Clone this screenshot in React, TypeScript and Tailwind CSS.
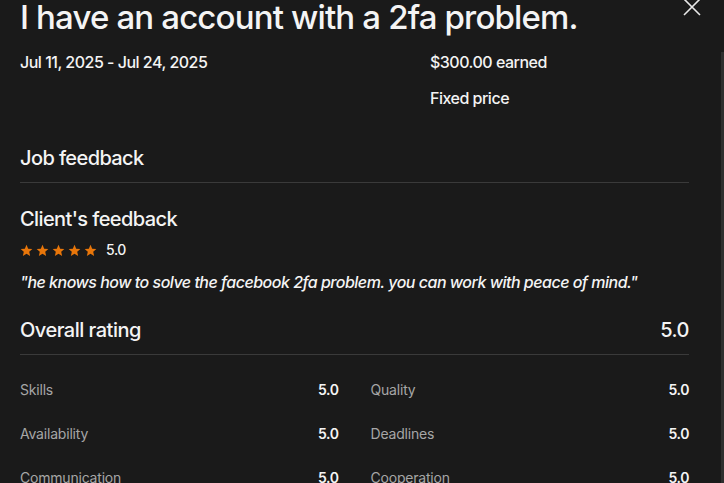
import React from "react";

const Star = () => (
  <svg width="13" height="13" viewBox="0 0 24 24" fill="#e8760a">
    <path d="M12 1.5l3.1 7.1 7.7.7-5.8 5.1 1.7 7.6L12 18l-6.7 4 1.7-7.6L1.2 9.3l7.7-.7z" />
  </svg>
);

const rows: [string, string, string, string][] = [
  ["Skills", "5.0", "Quality", "5.0"],
  ["Availability", "5.0", "Deadlines", "5.0"],
  ["Communication", "5.0", "Cooperation", "5.0"],
];

export default function App() {
  return (
    <div
      className="relative flex h-[483px] w-[724px] overflow-hidden bg-[#1a1a1a] text-[#f4f4f4]"
      style={{ fontFamily: 'Inter, "Liberation Sans", Arial, sans-serif' }}
    >
      <div className="flex-1 pl-5 pr-8">
        <h1 className="mt-px text-[33px] font-medium leading-[32px] tracking-[-0.85px]">I have an account with a 2fa problem.</h1>
        <div className="mt-[19px] flex">
          <div className="w-[410px] text-[16px] font-medium leading-[20px] tracking-[-0.5px]">Jul 11, 2025 - Jul 24, 2025</div>
          <div className="flex flex-col gap-4 text-[16px] font-medium leading-[20px] tracking-[-0.5px]">
            <div>$300.00 earned</div>
            <div>Fixed price</div>
          </div>
        </div>
        <div className="mt-[38px] border-b border-[#3a3a3a] pb-3 text-[20px] font-medium leading-[24px] tracking-[-0.6px]">
          Job feedback
        </div>
        <div className="mt-[24px] text-[20px] font-medium leading-[24px] tracking-[-0.6px]">Client's feedback</div>
        <div className="mt-[11px] flex h-4 items-center">
          <div className="flex gap-[3px]">
            <Star />
            <Star />
            <Star />
            <Star />
            <Star />
          </div>
          <span className="ml-[9px] text-[14px] font-medium leading-4 tracking-[-0.4px]">5.0</span>
        </div>
        <div className="mt-[14px] text-[16px] font-medium italic leading-[20px] tracking-[-0.5px]">
          "he knows how to solve the facebook 2fa problem. you can work with peace of mind."
        </div>
        <div className="mt-[26px] flex justify-between border-b border-[#3a3a3a] pb-3 text-[20px] font-medium leading-[24px] tracking-[-0.5px]">
          <span>Overall rating</span>
          <span>5.0</span>
        </div>
        <div className="mt-[25px] grid grid-cols-2 gap-x-8 gap-y-6 text-[14px] leading-[20px] tracking-[-0.2px]">
          {rows.map(([a, av, b, bv]) => (
            <React.Fragment key={a}>
              <div className="flex justify-between">
                <span className="text-[#a6a6a6]">{a}</span>
                <span className="font-semibold tracking-[-0.4px]">{av}</span>
              </div>
              <div className="flex justify-between">
                <span className="text-[#a6a6a6]">{b}</span>
                <span className="font-semibold tracking-[-0.4px]">{bv}</span>
              </div>
            </React.Fragment>
          ))}
        </div>
      </div>
      <div className="w-[3px] pt-[52px]">
        <div className="h-full bg-[#2e2e2e]" />
      </div>
      <button className="absolute right-[22px] top-[-3px] text-[#e8e8e8]">
        <svg width="20" height="20" viewBox="0 0 20 20" stroke="currentColor" strokeWidth="1.6" fill="none">
          <path d="M2 2L18 18M18 2L2 18" />
        </svg>
      </button>
    </div>
  );
}
